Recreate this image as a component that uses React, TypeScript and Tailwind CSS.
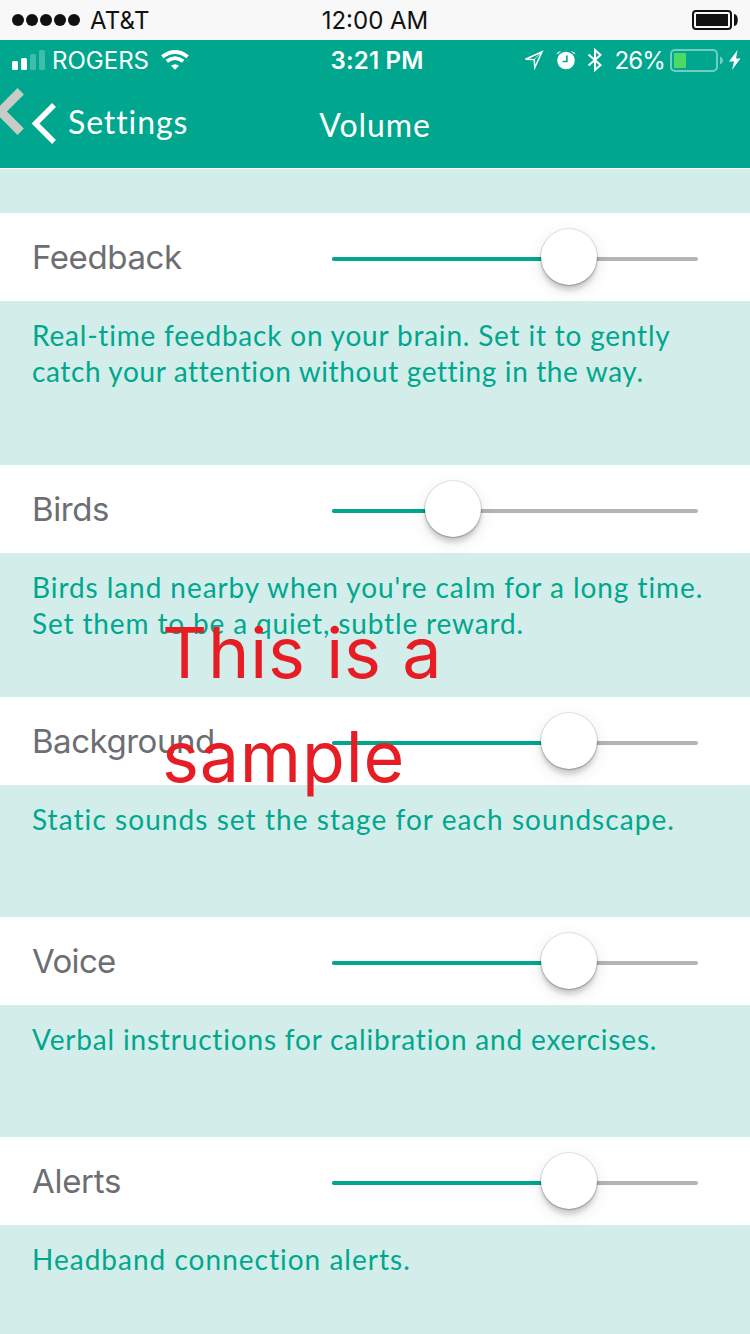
import React from "react";

type Setting = {
  label: string;
  lines: string[];
  value: number;
  note: string;
  spacing: string;
  lineSpacing: string[];
};

const settings: Setting[] = [
  {
    label: "Feedback",
    lines: [
      "Real-time feedback on your brain. Set it to gently",
      "catch your attention without getting in the way.",
    ],
    value: 237,
    note: "h-[164px]",
    spacing: "tracking-[-0.4px]",
    lineSpacing: ["tracking-[0.8px]", "tracking-[0.62px]"],
  },
  {
    label: "Birds",
    lines: [
      "Birds land nearby when you're calm for a long time.",
      "Set them to be a quiet, subtle reward.",
    ],
    value: 121,
    note: "h-[144px]",
    spacing: "tracking-[-0.4px]",
    lineSpacing: ["tracking-[0.93px]", "tracking-[0.86px]"],
  },
  {
    label: "Background",
    lines: ["Static sounds set the stage for each soundscape."],
    value: 237,
    note: "h-[132px]",
    spacing: "tracking-[-0.48px]",
    lineSpacing: ["tracking-[1.06px]"],
  },
  {
    label: "Voice",
    lines: ["Verbal instructions for calibration and exercises."],
    value: 237,
    note: "h-[132px]",
    spacing: "tracking-[-0.65px]",
    lineSpacing: ["tracking-[0.82px]"],
  },
  {
    label: "Alerts",
    lines: ["Headband connection alerts."],
    value: 237,
    note: "h-[109px]",
    spacing: "tracking-[-0.3px]",
    lineSpacing: ["tracking-[1.01px]"],
  },
];

function Slider({ value }: { value: number }) {
  return (
    <div className="relative mt-1 h-1 w-[366px] rounded-full bg-[#b3b4b4]">
      <div className="h-1 rounded-full bg-[#00a78e]" style={{ width: value }} />
      <div
        className="absolute top-[-28px] -ml-7 size-14 rounded-full bg-white shadow-[0_0_0_1px_rgba(0,0,0,0.08),0_1px_2px_rgba(0,0,0,0.25),0_6px_4px_rgba(0,0,0,0.13),0_5px_18px_rgba(0,0,0,0.1)]"
        style={{ left: value }}
      />
    </div>
  );
}

function SettingRow({ item }: { item: Setting }) {
  return (
    <section>
      <div className="flex h-[88px] items-center justify-between bg-white pr-[52px] pl-[32px]">
        <span className={`pb-px font-[Inter,sans-serif] text-[33px] leading-[40px] whitespace-nowrap text-[#6d6e71] ${item.spacing}`}>
          {item.label}
        </span>
        <Slider value={item.value} />
      </div>
      <div className={`pt-[16px] pl-[32px] font-[Lato,sans-serif] text-[28px] leading-[36px] text-[#00a78e] ${item.note}`}>
        {item.lines.map((line, i) => (
          <p key={line} className={`whitespace-nowrap ${item.lineSpacing[i]}`}>
            {line}
          </p>
        ))}
      </div>
    </section>
  );
}

function OuterStatus() {
  return (
    <div className="grid h-10 grid-cols-3 items-center bg-[#f8f8f8] font-[Inter,sans-serif] text-[24px] leading-[38px] text-[#111]">
      <div className="flex items-center pl-3">
        <svg width="68" height="12" viewBox="0 0 68 12" fill="#111">
          {[6, 20, 34, 48, 62].map((x) => (
            <circle key={x} cx={x} cy="6" r="6" />
          ))}
        </svg>
        <span className="ml-[10px] pt-px tracking-[0.2px]">AT&amp;T</span>
      </div>
      <span className="pt-px text-center">12:00 AM</span>
      <div className="flex justify-end pr-[12px]">
        <svg width="46" height="20" viewBox="0 0 46 20" fill="#111">
          <rect x="1" y="1" width="38" height="18" rx="3" fill="none" stroke="#111" strokeWidth="2" />
          <rect x="4" y="4" width="32" height="12" />
          <path d="M42 4c5 0 5 12 0 12z" />
        </svg>
      </div>
    </div>
  );
}

function InnerStatus() {
  return (
    <div className="grid h-10 grid-cols-[250px_250px_250px] items-center font-[Inter,sans-serif] text-[24px] leading-[38px]">
      <div className="flex items-center pl-3">
        <svg width="33" height="20" viewBox="0 0 33 20" fill="#fff">
          <rect y="11" width="6" height="9" rx="1.5" />
          <rect x="9" y="8" width="6" height="12" rx="1.5" />
          <rect x="18" y="4" width="6" height="16" rx="1.5" opacity=".25" />
          <rect x="27" y="0" width="6" height="20" rx="1.5" opacity=".25" />
        </svg>
        <span className="ml-[7px] pt-[2px]">ROGERS</span>
        <svg className="ml-3" width="28" height="20" viewBox="0 0 28 20" fill="none" stroke="#fff" strokeWidth="3.8">
          <path d="M1.3 6.7Q14-2.7 26.7 6.7" />
          <path d="M5.8 11.2Q14 5 22.2 11.2" />
          <path d="M14 19.8l-4-4q4-3.3 8 0z" fill="#fff" stroke="none" />
        </svg>
      </div>
      <span className="pt-[2px] pl-1 text-center font-semibold tracking-[0.2px]">3:21 PM</span>
      <div className="flex items-center justify-end pr-[9px]">
        <svg width="20" height="20" viewBox="0 0 20 20" fill="none" stroke="#fff" strokeWidth="1.5">
          <path d="M1.5 9.2L18 1.8 10.800 17.500 10.200 9.600z" />
          <path d="M18 1.8L10.200 9.600" strokeWidth=".8" />
        </svg>
        <svg className="ml-3" width="20" height="20" viewBox="0 0 20 20" fill="none">
          <circle cx="10" cy="10.5" r="8.8" fill="#fff" />
          <path d="M10.9 5.5v6H6.5" stroke="#00a78e" strokeWidth="1.6" />
          <path d="M.5 4.8Q1.3 1.3 5.3 1.2zM19.5 4.8Q18.7 1.3 14.7 1.2z" fill="#fff" />
        </svg>
        <svg className="ml-[11px]" width="16" height="24" viewBox="0 0 16 24" fill="none" stroke="#fff" strokeWidth="2">
          <path d="M1.500 6.500L13.500 17 8 22V2l5.500 5L1.500 17.500" />
        </svg>
        <span className="ml-[12px] pt-[2px] tracking-[-0.9px]">26%</span>
        <svg className="ml-[5px]" width="54" height="24" viewBox="0 0 54 24" fill="none">
          <rect x="1" y="2" width="46" height="21" rx="4" stroke="#fff" strokeOpacity=".45" strokeWidth="2" />
          <rect x="4" y="5" width="12" height="15" fill="#4cd964" />
          <path d="M50 8.500c4 1.500 4 6.500 0 8z" fill="#fff" opacity=".45" />
        </svg>
        <svg className="ml-[5px]" width="12" height="20" viewBox="0 0 12 20" fill="#fff">
          <path d="M8.500 0L0 11.500h5L3 20l8.500-11.500H7z" />
        </svg>
      </div>
    </div>
  );
}

function NavBar() {
  return (
    <nav className="grid h-[88px] grid-cols-[250px_250px_250px] font-[Lato,sans-serif] text-[32px]">
      <div className="flex">
        <svg width="60" height="88" viewBox="0 0 60 88" fill="none" strokeLinejoin="miter">
          <path d="M20.700 11.300L.500 31.500 20.700 51.700" stroke="#c7ccc7" strokeWidth="9" />
          <path d="M54 25L35.500 43.500 54 62" stroke="#fff" strokeWidth="5.500" />
        </svg>
        <span className="ml-2 pt-[22px] leading-[40px] tracking-[0.9px]">Settings</span>
      </div>
      <span className="pt-[25px] text-center leading-[40px] tracking-[0.9px]">Volume</span>
    </nav>
  );
}

export default function App() {
  return (
    <main className="relative h-[1334px] w-[750px] overflow-hidden bg-[#d3eeea]">
      <OuterStatus />
      <header className="h-32 bg-[#00a78e] text-white">
        <InnerStatus />
        <NavBar />
      </header>
      <div className="h-[45px] border-t border-white" />
      {settings.map((item) => (
        <SettingRow key={item.label} item={item} />
      ))}
      <p className="absolute top-[601px] left-[162px] font-[Inter,sans-serif] text-[70px] leading-[104px] tracking-[0.8px] whitespace-nowrap text-[#e71d25]">
        This is a<br />
        sample
      </p>
    </main>
  );
}
